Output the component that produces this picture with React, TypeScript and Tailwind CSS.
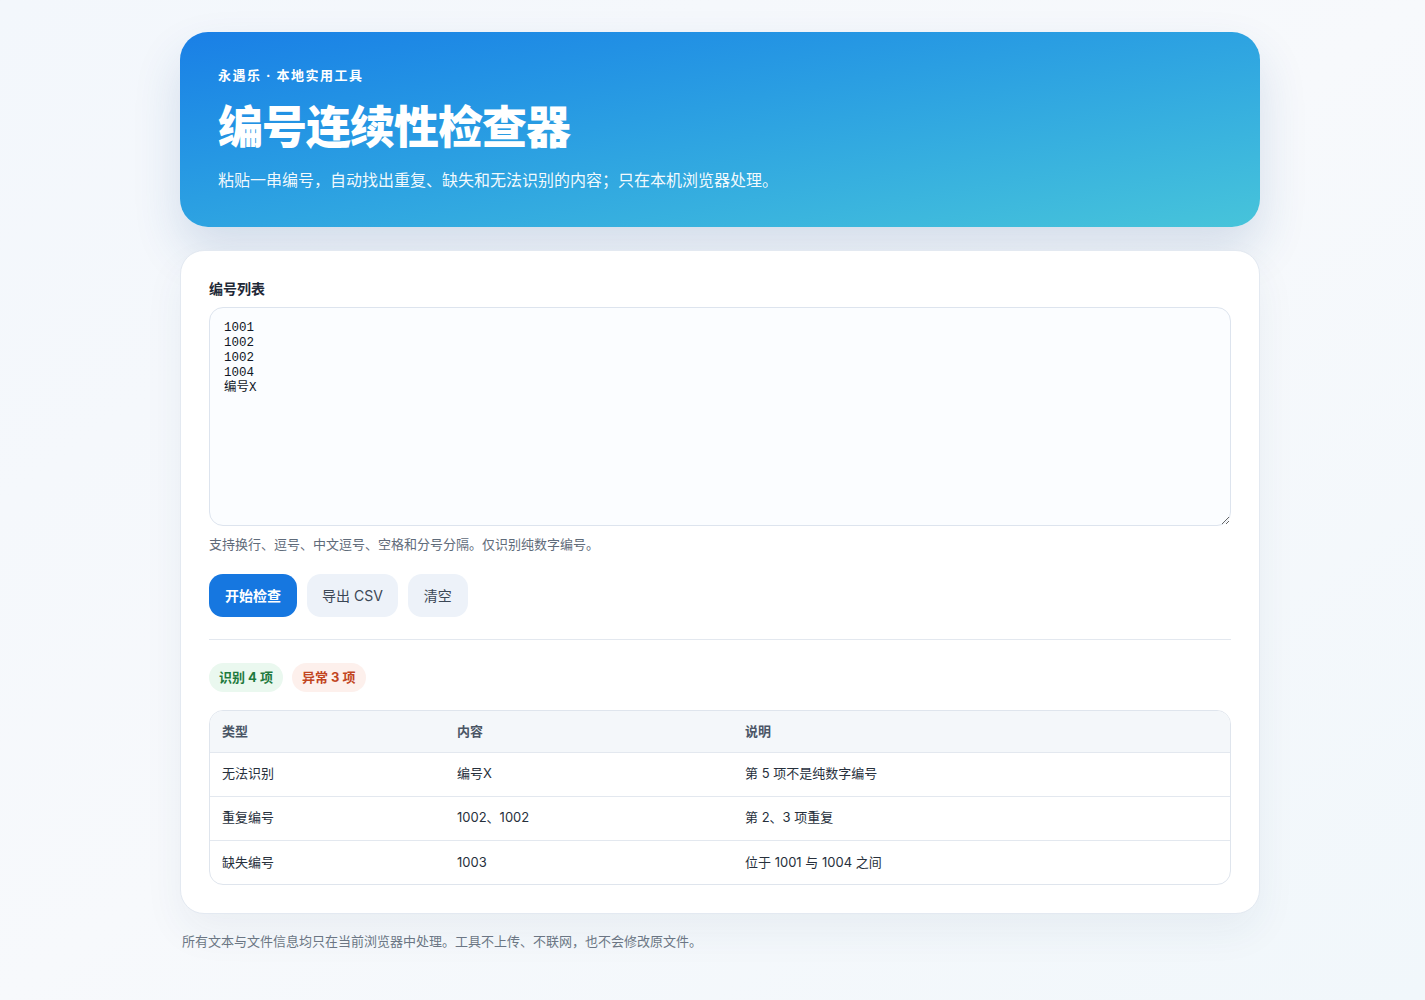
export default function App() {
  const rows = [
    { type: '无法识别', content: '编号X', note: '第 5 项不是纯数字编号' },
    { type: '重复编号', content: '1002、1002', note: '第 2、3 项重复' },
    { type: '缺失编号', content: '1003', note: '位于 1001 与 1004 之间' },
  ]

  return (
    <div
      className="min-h-screen bg-gradient-to-br from-[#f3f7fc] via-[#f7f9fc] to-[#f1f7fb] pt-8 pb-12"
      style={{ fontFamily: 'Inter, "Noto Sans CJK SC", sans-serif' }}
    >
      <div className="ml-[180px] w-[1080px]">
        <header className="h-[195px] rounded-[28px] bg-gradient-to-br from-[#1a7fe6] to-[#47c4da] px-[38px] pt-[34px] text-white shadow-[0_24px_48px_rgba(30,80,140,0.16)]">
          <div className="text-[13px] font-bold leading-[18px] tracking-[1.5px]">永遇乐 · 本地实用工具</div>
          <h1 className="mt-[16px] text-[45px] font-black leading-[56px] tracking-[-1px]">编号连续性检查器</h1>
          <p className="mt-[12px] text-[16px] leading-[24px] text-white/95">
            粘贴一串编号，自动找出重复、缺失和无法识别的内容；只在本机浏览器处理。
          </p>
        </header>

        <main className="mt-[23px] rounded-[24px] border border-[#e3e9f1] bg-white px-[28px] pt-[28px] pb-[28px] shadow-[0_18px_40px_rgba(30,60,110,0.06)]">
          <label className="block text-[14px] font-bold leading-[20px] text-[#1f2937]">编号列表</label>
          <textarea
            className="mt-[8px] block h-[219px] w-full resize-y rounded-[14px] border border-[#dde4ee] bg-[#fbfdff] px-[14px] py-[13px] text-[12.5px] leading-[15px] text-[#111827] outline-none"
            style={{ fontFamily: '"Liberation Mono", "Noto Sans CJK SC", monospace' }}
            defaultValue={'1001\n1002\n1002\n1004\n编号X'}
          />
          <p className="mt-[9px] text-[13px] leading-[18px] text-[#5f6b7a]">
            支持换行、逗号、中文逗号、空格和分号分隔。仅识别纯数字编号。
          </p>

          <div className="mt-[21px] flex gap-[10px]">
            <button className="h-[43px] rounded-[14px] bg-[#1677e0] px-[16px] text-[14px] font-semibold text-white">开始检查</button>
            <button className="h-[43px] rounded-[14px] bg-[#edf2f9] px-[15px] text-[14px] text-[#3b4756]">导出 CSV</button>
            <button className="h-[43px] rounded-[14px] bg-[#edf2f9] px-[16px] text-[14px] text-[#3b4756]">清空</button>
          </div>

          <div className="mt-[22px] h-px bg-[#e3e8ef]" />

          <div className="mt-[23px] flex gap-[9px]">
            <span className="flex h-[29px] items-center rounded-full bg-[#eaf8ef] px-[10px] text-[13px] font-bold text-[#1f7a3e]">识别 4 项</span>
            <span className="flex h-[29px] items-center rounded-full bg-[#fdf0ec] px-[10px] text-[13px] font-bold text-[#c2451e]">异常 3 项</span>
          </div>

          <div className="mt-[18px] overflow-hidden rounded-[14px] border border-[#dfe5ed]">
            <table className="w-full table-fixed border-collapse text-left text-[13px]">
              <thead>
                <tr className="h-[41px] bg-[#f4f7fa] text-[#4a5565]">
                  <th className="w-[235px] px-[12px] font-bold">类型</th>
                  <th className="w-[288px] px-[12px] font-bold">内容</th>
                  <th className="px-[12px] font-bold">说明</th>
                </tr>
              </thead>
              <tbody>
                {rows.map((r) => (
                  <tr key={r.type} className="h-[44px] border-t border-[#e3e8ef] text-[#27303c]">
                    <td className="px-[12px]">{r.type}</td>
                    <td className="px-[12px]">{r.content}</td>
                    <td className="px-[12px]">{r.note}</td>
                  </tr>
                ))}
              </tbody>
            </table>
          </div>
        </main>

        <p className="mt-[18px] pl-[2px] text-[13px] leading-[18px] text-[#6b7684]">
          所有文本与文件信息均只在当前浏览器中处理。工具不上传、不联网，也不会修改原文件。
        </p>
      </div>
    </div>
  )
}
